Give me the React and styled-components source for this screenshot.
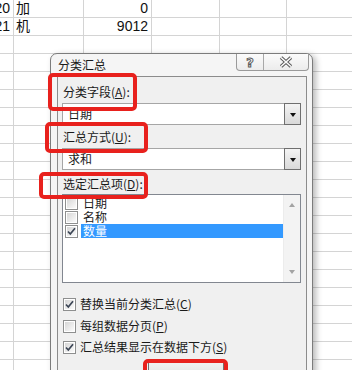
import styled, { createGlobalStyle } from "styled-components";

const GlobalStyle = createGlobalStyle`
  html, body {
    margin: 0;
    padding: 0;
    background: #ffffff;
  }
  body {
    font-family: "Liberation Sans", "Noto Sans CJK SC", sans-serif;
  }
`;

const Page = styled.div`
  position: relative;
  width: 352px;
  height: 370px;
  overflow: hidden;
  background: #ffffff;
`;

const Sheet = styled.div`
  display: grid;
  grid-template-columns: 14px 70px 68px 68px 67px 70px;
  grid-auto-rows: 18px;
  font-family: "Liberation Sans", "Noto Sans CJK SC", sans-serif;
  font-size: 14px;
  color: #111;
`;

const Cell = styled.div`
  box-sizing: border-box;
  border-right: 1px solid #d4d4d4;
  border-bottom: 1px solid #d4d4d4;
  display: flex;
  align-items: center;
  justify-content: ${(p) => (p.$align === "right" ? "flex-end" : "flex-start")};
  padding: ${(p) => (p.$align === "right" ? "0 3px 0 0" : "0 0 0 2px")};
  overflow: hidden;
  white-space: nowrap;
  line-height: 17px;
`;

const Dialog = styled.div`
  position: absolute;
  left: 50px;
  top: 53px;
  width: 263px;
  height: 330px;
  box-sizing: border-box;
  border: 1px solid #7c7c7c;
  border-radius: 7px 7px 0 0;
  background: #f5f5f5;
  box-shadow: 3px 2px 6px rgba(0, 0, 0, 0.28);
  display: flex;
  flex-direction: column;
  font-family: "Noto Sans CJK SC", "Liberation Sans", sans-serif;
  font-size: 12px;
  color: #1a1a1a;
`;

const TitleBar = styled.div`
  height: 26px;
  display: flex;
  align-items: flex-start;
  padding: 0 3px 0 7px;
`;

const Title = styled.div`
  padding-top: 4px;
  line-height: 14px;
  flex: 1;
`;

const CaptionButtons = styled.div`
  display: flex;
  height: 16px;
  border: 1px solid #9a9a9a;
  border-top: none;
  border-radius: 0 0 4px 4px;
  background: linear-gradient(#fbfbfb, #ececec);
  overflow: hidden;
`;

const CaptionButton = styled.div`
  width: ${(p) => p.$w}px;
  display: flex;
  align-items: center;
  justify-content: center;
  & + & {
    border-left: 1px solid #a8a8a8;
  }
`;

const HelpGlyph = styled.span`
  font-family: "DejaVu Sans", sans-serif;
  font-weight: bold;
  font-size: 13px;
  line-height: 13px;
  color: #fafafa;
  -webkit-text-stroke: 1px #5c5c5c;
`;

const Panel = styled.div`
  flex: 1;
  margin: 0 5px 0 6px;
  border: 1px solid #8c8c8c;
  border-bottom: none;
  background: #f0f0f0;
  display: flex;
  flex-direction: column;
  padding-left: 4px;
`;

const Label = styled.div`
  height: 16px;
  line-height: 16px;
  padding-left: 1px;
  margin-top: ${(p) => p.$mt}px;
`;

const Select = styled.div`
  width: 239px;
  height: 22px;
  box-sizing: border-box;
  margin-top: ${(p) => p.$mt}px;
  border: 1px solid #a6a6a6;
  background: #ffffff;
  display: flex;
  align-items: stretch;
`;

const SelectText = styled.div`
  flex: 1;
  padding-left: 5px;
  line-height: 20px;
`;

const DropButton = styled.div`
  width: 17px;
  margin: -1px -1px -1px 0;
  box-sizing: border-box;
  border: 1px solid #6f6f6f;
  background: linear-gradient(#f4f4f4, #d9d9d9);
  display: flex;
  align-items: center;
  justify-content: center;
`;

const Arrow = styled.div`
  width: 0;
  height: 0;
  border-left: 3.5px solid transparent;
  border-right: 3.5px solid transparent;
  ${(p) =>
    p.$up
      ? `border-bottom: 4px solid ${p.$color};`
      : `border-top: 4px solid ${p.$color};`}
  margin-top: ${(p) => (p.$up ? 0 : 2)}px;
`;

const ListBox = styled.div`
  width: 239px;
  height: 89px;
  box-sizing: border-box;
  margin-top: 2px;
  border: 1px solid #828790;
  background: #ffffff;
  display: flex;
`;

const Items = styled.div`
  flex: 1;
  padding-top: 1px;
  display: flex;
  flex-direction: column;
`;

const Item = styled.div`
  height: 14px;
  display: flex;
  align-items: center;
  padding-left: 2px;
  gap: 3px;
`;

const ItemText = styled.div`
  flex: 1;
  height: 14px;
  line-height: 14px;
  padding-left: 2px;
  background: ${(p) => (p.$selected ? "#3399ff" : "transparent")};
  color: ${(p) => (p.$selected ? "#ffffff" : "#1a1a1a")};
`;

const ScrollBar = styled.div`
  width: 16px;
  background: #f3f3f3;
  border-left: 1px solid #ececec;
  display: flex;
  flex-direction: column;
  align-items: center;
  justify-content: space-between;
  padding: 8px 0 8px;
`;

const CheckRow = styled.div`
  height: 16px;
  display: flex;
  align-items: center;
  gap: 4px;
  padding-left: 1px;
  margin-top: ${(p) => p.$mt}px;
  line-height: 16px;
`;

const ButtonRow = styled.div`
  display: flex;
  padding-left: 86px;
  margin-top: 5px;
`;

const PushButton = styled.div`
  width: 76px;
  height: 22px;
  box-sizing: border-box;
  border: 1px solid #707070;
  border-radius: 3px;
  background: linear-gradient(#f2f2f2, #dddddd);
`;

const Callout = styled.div`
  position: absolute;
  left: ${(p) => p.$x}px;
  top: ${(p) => p.$y}px;
  width: ${(p) => p.$w}px;
  height: ${(p) => p.$h}px;
  box-sizing: border-box;
  border: 4px solid #e8211d;
  border-radius: 5px;
`;

function Checkbox({ checked }) {
  return (
    <svg width="13" height="13" viewBox="0 0 13 13">
      <defs>
        <linearGradient id="cbg" x1="0" y1="0" x2="1" y2="1">
          <stop offset="0" stopColor="#d6d6d6" />
          <stop offset="1" stopColor="#fbfbfb" />
        </linearGradient>
      </defs>
      <rect x="0.5" y="0.5" width="12" height="12" fill="#fff" stroke="#8e8f8f" />
      <rect x="2" y="2" width="9" height="9" fill="url(#cbg)" />
      {checked && (
        <path
          d="M3 6.5 L5.3 9 L10 3.2"
          fill="none"
          stroke="#3c4656"
          strokeWidth="1.7"
        />
      )}
    </svg>
  );
}

function CloseIcon() {
  return (
    <svg width="14" height="12" viewBox="0 0 14 12">
      <path d="M2 1.5 L12 10.5 M12 1.5 L2 10.5" stroke="#5a5a5a" strokeWidth="3.6" />
      <path d="M2 1.5 L12 10.5 M12 1.5 L2 10.5" stroke="#fafafa" strokeWidth="1.6" />
    </svg>
  );
}

const rows = [
  ["20", "加", "0"],
  ["21", "机", "9012"],
];

export default function App() {
  const sheetRows = Array.from({ length: 21 }, (_, r) => rows[r] || ["", "", ""]);
  return (
    <Page>
      <GlobalStyle />
      <Sheet>
        {sheetRows.map((row, r) => (
          <>
            <Cell key={`a${r}`} $align="right">{row[0]}</Cell>
            <Cell key={`b${r}`}>{row[1]}</Cell>
            <Cell key={`c${r}`} $align="right">{row[2]}</Cell>
            <Cell key={`d${r}`} />
            <Cell key={`e${r}`} />
            <Cell key={`f${r}`} />
          </>
        ))}
      </Sheet>

      <Dialog>
        <TitleBar>
          <Title>分类汇总</Title>
          <CaptionButtons>
            <CaptionButton $w={26}>
              <HelpGlyph>?</HelpGlyph>
            </CaptionButton>
            <CaptionButton $w={44}>
              <CloseIcon />
            </CaptionButton>
          </CaptionButtons>
        </TitleBar>
        <Panel>
          <Label $mt={7}>
            分类字段(<u>A</u>):
          </Label>
          <Select $mt={3}>
            <SelectText>日期</SelectText>
            <DropButton>
              <Arrow $color="#111" />
            </DropButton>
          </Select>
          <Label $mt={4}>
            汇总方式(<u>U</u>):
          </Label>
          <Select $mt={3}>
            <SelectText>求和</SelectText>
            <DropButton>
              <Arrow $color="#111" />
            </DropButton>
          </Select>
          <Label $mt={6}>
            选定汇总项(<u>D</u>):
          </Label>
          <ListBox>
            <Items>
              <Item>
                <Checkbox />
                <ItemText>日期</ItemText>
              </Item>
              <Item>
                <Checkbox />
                <ItemText>名称</ItemText>
              </Item>
              <Item>
                <Checkbox checked />
                <ItemText $selected>数量</ItemText>
              </Item>
            </Items>
            <ScrollBar>
              <Arrow $up $color="#a3a3a3" />
              <Arrow $color="#a3a3a3" />
            </ScrollBar>
          </ListBox>
          <CheckRow $mt={13}>
            <Checkbox checked />
            <span>
              替换当前分类汇总(<u>C</u>)
            </span>
          </CheckRow>
          <CheckRow $mt={6}>
            <Checkbox />
            <span>
              每组数据分页(<u>P</u>)
            </span>
          </CheckRow>
          <CheckRow $mt={5}>
            <Checkbox checked />
            <span>
              汇总结果显示在数据下方(<u>S</u>)
            </span>
          </CheckRow>
          <ButtonRow>
            <PushButton />
          </ButtonRow>
        </Panel>
      </Dialog>

      <Callout $x={48} $y={73} $w={89} $h={38} />
      <Callout $x={45} $y={122} $w={103} $h={31} />
      <Callout $x={39} $y={172} $w={109} $h={27} />
      <Callout $x={143} $y={359} $w={85} $h={24} />
    </Page>
  );
}
